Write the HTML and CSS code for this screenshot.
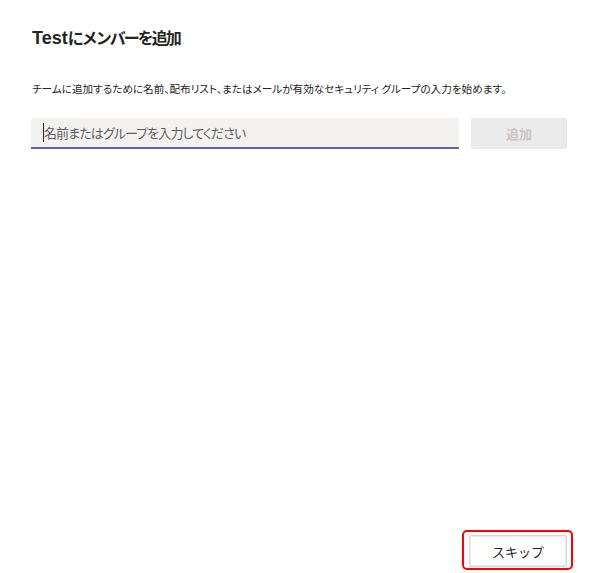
FILE: index.html
```html
<!DOCTYPE html>
<html lang="ja">
<head>
<meta charset="utf-8">
<link rel="stylesheet" href="styles.css">
</head>
<body>
<div class="dialog">
  <h1 class="title"><span class="latin">Test</span><span class="jp">にメンバーを追加</span></h1>
  <p class="desc">チームに追加するために名前、配布リスト、またはメールが有効なセキュリティ グループの入力を始めます。</p>
  <div class="row">
    <div class="field"><span class="caret"></span><span class="placeholder">名前またはグループを入力してください</span></div>
    <button class="add">追加</button>
  </div>
  <div class="footer">
    <div class="highlight"><button class="skip">スキップ</button></div>
  </div>
</div>
</body>
</html>
```

FILE: styles.css
```css
html, body {
  margin: 0;
  padding: 0;
  background: #ffffff;
}
body {
  font-family: "Noto Sans CJK JP", "Noto Sans", sans-serif;
  color: #252423;
}
.dialog {
  box-sizing: border-box;
  width: 596px;
  height: 573px;
  padding: 0 29px 0 31px;
  display: flex;
  flex-direction: column;
}
.title {
  margin: 25px 0 0 1px;
  font-size: 16px;
  line-height: 24px;
  font-weight: 700;
  color: #252423;
  white-space: nowrap;
}
.title .latin {
  font-family: "Liberation Sans", sans-serif;
  font-size: 18px;
}
.title .jp {
  letter-spacing: -2px;
}
.desc {
  margin: 31px 0 0 1px;
  font-size: 10.6px;
  line-height: 16px;
  font-feature-settings: "palt";
  color: #252423;
  white-space: nowrap;
}
.row {
  margin-top: 21px;
  display: flex;
  gap: 12px;
}
.field {
  box-sizing: border-box;
  width: 428px;
  height: 31px;
  background: #f3f2f1;
  border-radius: 3px 3px 0 0;
  border-bottom: 2px solid #6264a7;
  display: flex;
  align-items: center;
  padding-left: 12px;
}
.caret {
  width: 1px;
  height: 19px;
  background: #252423;
}
.placeholder {
  font-size: 13px;
  color: #605e5c;
  font-feature-settings: "palt";
  letter-spacing: -0.9px;
}
.add {
  width: 96px;
  height: 31px;
  border: none;
  border-radius: 2px;
  background: #ebebeb;
  color: #c8c6c4;
  font-family: "Noto Sans CJK JP", sans-serif;
  font-size: 13px;
  font-weight: 700;
  padding: 0;
}
.footer {
  margin-top: auto;
  display: flex;
  justify-content: flex-end;
  margin-right: -6px;
  margin-bottom: 3px;
}
.highlight {
  border: 2px solid #ff0000;
  border-radius: 5px;
  padding: 3px 4px 1px 5px;
}
.skip {
  display: block;
  box-sizing: border-box;
  width: 98px;
  height: 32px;
  background: #ffffff;
  border: 1px solid #d6d6d6;
  box-shadow: inset 0 0 0 1px #ececec;
  border-radius: 2px;
  font-family: "Noto Sans CJK JP", sans-serif;
  font-size: 13px;
  color: #252423;
  padding: 0;
}
```
